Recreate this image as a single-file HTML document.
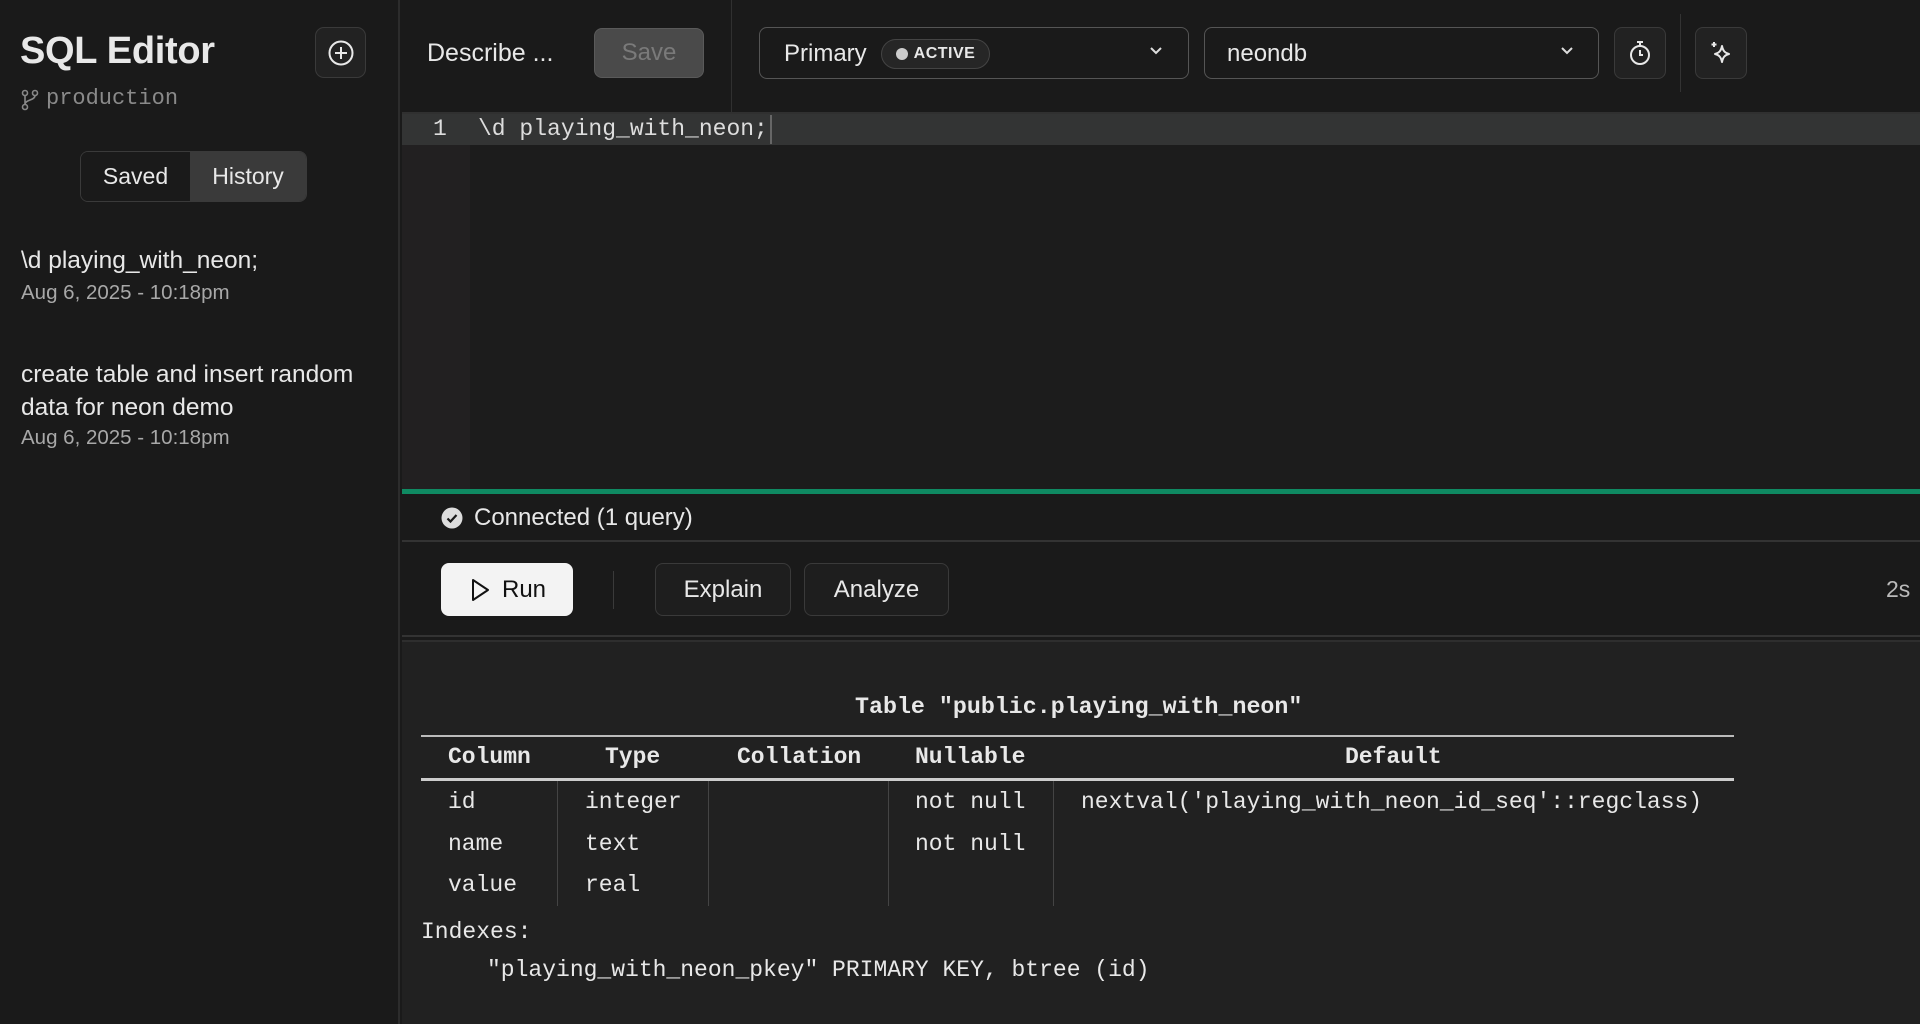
<!DOCTYPE html>
<html><head><meta charset="utf-8"><style>
*{margin:0;padding:0;box-sizing:border-box}
body{width:1920px;height:1024px;background:#1a1a1a;color:#e8e8e8;font-family:"Liberation Sans",sans-serif;position:relative;overflow:hidden}
.a{position:absolute;white-space:nowrap}
.m{font-family:"Liberation Mono",monospace}
.btn{position:absolute;border:1px solid #3a3a3a;border-radius:8px;background:#1e1e1e}
.c{display:flex;align-items:center;justify-content:center}
</style></head><body>
<div class="a" style="left:0;top:0;width:400px;height:1024px;background:#1a1a1a;border-right:2px solid #2c2c2c"></div>
<div class="a" style="left:20px;top:30px;font-size:38px;font-weight:bold;color:#e8e8e8;letter-spacing:-0.3px">SQL Editor</div>
<div class="btn c" style="left:315px;top:27px;width:51px;height:51px;border-radius:9px;background:#222">
<svg width="28" height="28" viewBox="0 0 28 28" fill="none" stroke="#e8e8e8" stroke-width="2"><circle cx="14" cy="14" r="11.5"/><path d="M14 8v12M8 14h12"/></svg></div>
<svg class="a" style="left:20px;top:89px" width="20" height="22" viewBox="0 0 20 22" fill="none" stroke="#888" stroke-width="1.6"><circle cx="5" cy="4" r="2.5"/><circle cx="15" cy="4" r="2.5"/><circle cx="5" cy="18" r="2.5"/><path d="M5 6.5v9M15 6.5c0 5-10 4-10 9"/></svg>
<div class="a m" style="left:46px;top:86px;font-size:22px;color:#8a8a8a">production</div>
<div class="a" style="left:80px;top:151px;width:227px;height:51px;border:1px solid #3a3a3a;border-radius:8px;overflow:hidden;display:flex;font-size:23px">
<div class="c" style="width:109px;background:#1a1a1a">Saved</div>
<div class="c" style="flex:1;background:#3a3a3a">History</div></div>
<div class="a" style="left:21px;top:247px;font-size:24.5px">\d playing_with_neon;</div>
<div class="a" style="left:21px;top:281px;font-size:20.5px;color:#a8a8a8">Aug 6, 2025 - 10:18pm</div>
<div class="a" style="left:21px;top:361px;font-size:24.5px">create table and insert random</div>
<div class="a" style="left:21px;top:394px;font-size:24.5px">data for neon demo</div>
<div class="a" style="left:21px;top:426px;font-size:20.5px;color:#a8a8a8">Aug 6, 2025 - 10:18pm</div>

<div class="a" style="left:402px;top:0;width:1518px;height:114px;background:#1a1a1a;border-bottom:2px solid #303030"></div>
<div class="a" style="left:427px;top:39px;font-size:25px">Describe ...</div>
<div class="a c" style="left:594px;top:28px;width:110px;height:50px;border-radius:8px;background:#4a4a4a;border:1px solid #5a5a5a;color:#7a7a7a;font-size:24px">Save</div>
<div class="a" style="left:731px;top:0;width:1px;height:113px;background:#303030"></div>
<div class="btn" style="left:759px;top:27px;width:430px;height:52px;background:#1a1a1a;border-color:#555"></div>
<div class="a" style="left:784px;top:40px;font-size:24px">Primary</div>
<div class="a c" style="left:881px;top:39px;width:109px;height:30px;border:1px solid #444;border-radius:15px;background:#262626;font-size:16px;font-weight:bold;letter-spacing:0.5px"><span style="display:inline-block;width:12px;height:12px;border-radius:6px;background:#ccc;margin-right:6px"></span>ACTIVE</div>
<svg class="a" style="left:1149px;top:46px" width="14" height="10" viewBox="0 0 14 10" fill="none" stroke="#ddd" stroke-width="2"><path d="M2 2l5 5 5-5"/></svg>
<div class="btn" style="left:1204px;top:27px;width:395px;height:52px;background:#1a1a1a;border-color:#555"></div>
<div class="a" style="left:1227px;top:40px;font-size:24px">neondb</div>
<svg class="a" style="left:1560px;top:46px" width="14" height="10" viewBox="0 0 14 10" fill="none" stroke="#ddd" stroke-width="2"><path d="M2 2l5 5 5-5"/></svg>
<div class="btn c" style="left:1614px;top:27px;width:52px;height:52px;background:#222">
<svg width="26" height="28" viewBox="0 0 26 28" fill="none" stroke="#e8e8e8" stroke-width="2"><path d="M10 3h6M13 3v4"/><circle cx="13" cy="16" r="9"/><path d="M13 11v5h3"/></svg></div>
<div class="a" style="left:1680px;top:14px;width:1px;height:78px;background:#333"></div>
<div class="btn c" style="left:1695px;top:27px;width:52px;height:52px;background:#222">
<svg width="26" height="28" viewBox="0 0 26 28" fill="none" stroke="#e8e8e8" stroke-width="2" stroke-linejoin="round"><path d="M14 7c1 5 3 7 7 8-4 1-6 3-7 8-1-5-3-7-7-8 4-1 6-3 7-8z"/><path d="M6 3v5M3.5 5.5h5"/></svg></div>

<div class="a" style="left:402px;top:114px;width:1518px;height:377px;background:#1c1c1c"></div>
<div class="a" style="left:402px;top:114px;width:68px;height:377px;background:#222021"></div>
<div class="a" style="left:402px;top:114px;width:1518px;height:31px;background:#333434"></div>
<div class="a m" style="left:433px;top:116px;font-size:23px;color:#ddd">1</div>
<div class="a m" style="left:478px;top:116px;font-size:23px;color:#ddd">\d playing_with_neon;</div>
<div class="a" style="left:770px;top:115px;width:2px;height:29px;background:#666"></div>
<div class="a" style="left:402px;top:489px;width:1518px;height:5px;background:#0f8a62"></div>

<div class="a" style="left:402px;top:494px;width:1518px;height:48px;background:#1a1a1a;border-bottom:2px solid #333"></div>
<svg class="a" style="left:441px;top:507px" width="22" height="22" viewBox="0 0 22 22"><circle cx="11" cy="11" r="10.5" fill="#ddd"/><path d="M6.5 11.5l3 3 6-6.5" fill="none" stroke="#1a1a1a" stroke-width="2.2"/></svg>
<div class="a" style="left:474px;top:504px;font-size:24px">Connected (1 query)</div>
<div class="a c" style="left:441px;top:563px;width:132px;height:53px;border-radius:8px;background:#f3f3f3;color:#111;font-size:24px">
<svg width="24" height="26" viewBox="0 0 24 26" fill="none" stroke="#111" stroke-width="2" stroke-linejoin="round" style="margin-right:10px"><path d="M5 3l15 10-15 10z"/></svg>Run</div>
<div class="a" style="left:613px;top:571px;width:1px;height:38px;background:#3a3a3a"></div>
<div class="btn c" style="left:655px;top:563px;width:136px;height:53px;font-size:24px">Explain</div>
<div class="btn c" style="left:804px;top:563px;width:145px;height:53px;font-size:24px">Analyze</div>
<div class="a" style="left:1886px;top:576px;font-size:23px;color:#bbb">2s</div>
<div class="a" style="left:402px;top:635px;width:1518px;height:2px;background:#333"></div>
<div class="a" style="left:402px;top:640px;width:1518px;height:384px;background:#212121;border-top:2px solid #2e2e2e"></div>

<div class="a m" style="left:855px;top:694px;font-size:23.3px;font-weight:bold">Table "public.playing_with_neon"</div>
<div class="a" style="left:421px;top:735px;width:1313px;height:2px;background:#bbb"></div>
<div class="a m" style="left:448px;top:744px;font-size:23px;font-weight:bold">Column</div>
<div class="a m" style="left:605px;top:744px;font-size:23px;font-weight:bold">Type</div>
<div class="a m" style="left:737px;top:744px;font-size:23px;font-weight:bold">Collation</div>
<div class="a m" style="left:915px;top:744px;font-size:23px;font-weight:bold">Nullable</div>
<div class="a m" style="left:1345px;top:744px;font-size:23px;font-weight:bold">Default</div>
<div class="a" style="left:421px;top:778px;width:1313px;height:3px;background:#ccc"></div>
<div class="a" style="left:557px;top:781px;width:1px;height:125px;background:#444"></div>
<div class="a" style="left:708px;top:781px;width:1px;height:125px;background:#444"></div>
<div class="a" style="left:888px;top:781px;width:1px;height:125px;background:#444"></div>
<div class="a" style="left:1053px;top:781px;width:1px;height:125px;background:#444"></div>
<div class="a m" style="left:448px;top:789px;font-size:23px">id</div>
<div class="a m" style="left:585px;top:789px;font-size:23px">integer</div>
<div class="a m" style="left:915px;top:789px;font-size:23px">not null</div>
<div class="a m" style="left:1081px;top:789px;font-size:23px">nextval('playing_with_neon_id_seq'::regclass)</div>
<div class="a m" style="left:448px;top:831px;font-size:23px">name</div>
<div class="a m" style="left:585px;top:831px;font-size:23px">text</div>
<div class="a m" style="left:915px;top:831px;font-size:23px">not null</div>
<div class="a m" style="left:448px;top:872px;font-size:23px">value</div>
<div class="a m" style="left:585px;top:872px;font-size:23px">real</div>
<div class="a m" style="left:421px;top:919px;font-size:23px">Indexes:</div>
<div class="a m" style="left:487px;top:957px;font-size:23px">"playing_with_neon_pkey" PRIMARY KEY, btree (id)</div>
</body></html>
